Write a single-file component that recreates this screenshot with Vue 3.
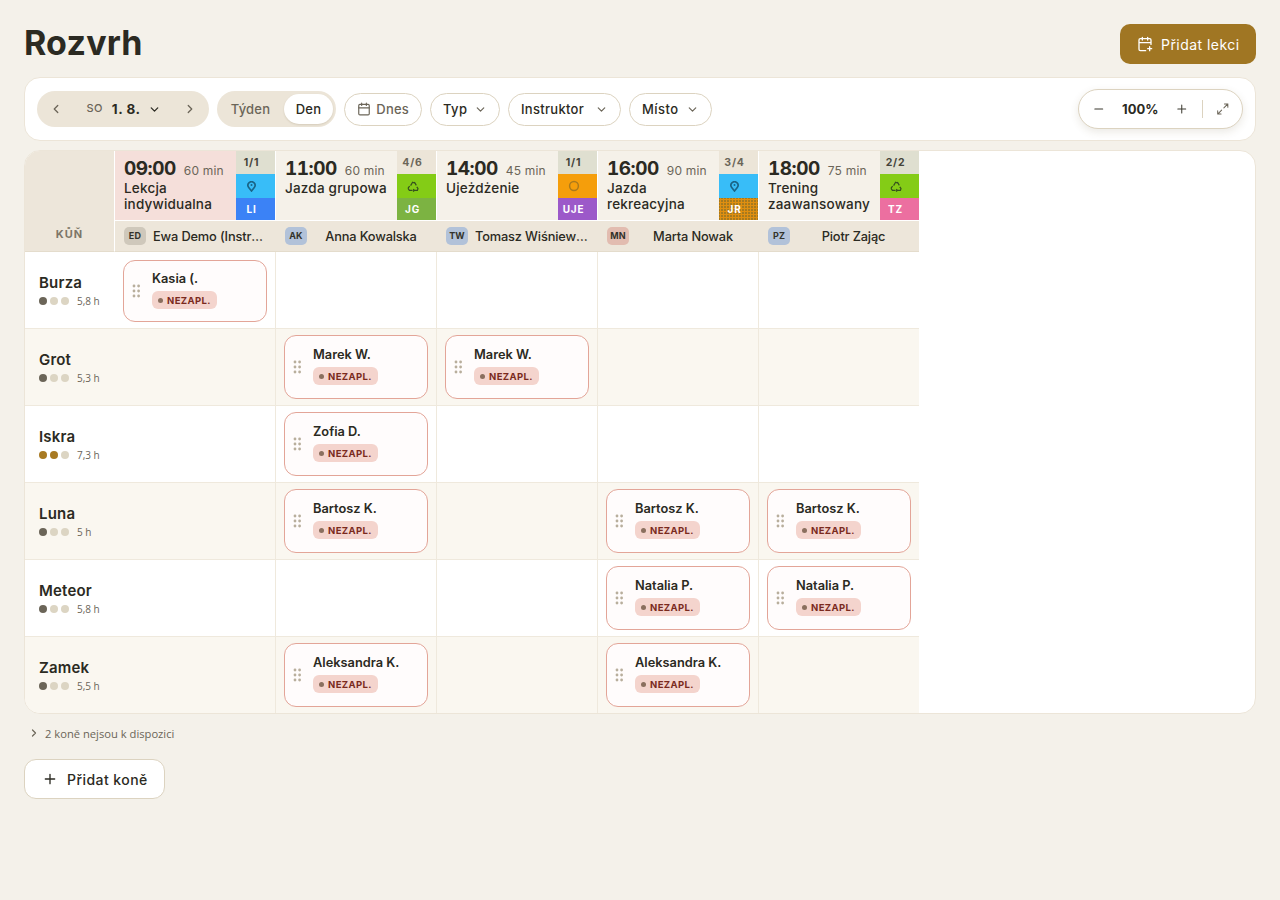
<script setup>
const lessons = [
  { time: '09:00', len: '60 min', title: 'Lekcja indywidualna', count: '1/1', full: true, icon: 'pin', iconBg: 'sky', code: 'LI', codeBg: 'blue', tone: 'rose', ini: 'ED', av: 'stone', name: 'Ewa Demo (Instruktor)' },
  { time: '11:00', len: '60 min', title: 'Jazda grupowa', count: '4/6', full: false, icon: 'leaf', iconBg: 'lime', code: 'JG', codeBg: 'green', tone: 'plain', ini: 'AK', av: 'steel', name: 'Anna Kowalska' },
  { time: '14:00', len: '45 min', title: 'Ujeżdżenie', count: '1/1', full: true, icon: 'ring', iconBg: 'amber', code: 'UJE', codeBg: 'purple', tone: 'plain', ini: 'TW', av: 'steel', name: 'Tomasz Wiśniewski' },
  { time: '16:00', len: '90 min', title: 'Jazda rekreacyjna', count: '3/4', full: false, icon: 'pin', iconBg: 'sky', code: 'JR', codeBg: 'ochre', tone: 'plain', ini: 'MN', av: 'blush', name: 'Marta Nowak' },
  { time: '18:00', len: '75 min', title: 'Trening zaawansowany', count: '2/2', full: true, icon: 'leaf', iconBg: 'lime', code: 'TZ', codeBg: 'pink', tone: 'plain', ini: 'PZ', av: 'steel', name: 'Piotr Zając' },
]

const horses = [
  { name: 'Burza', level: 1, dark: true, hours: '5,8 h', slots: ['Kasia (.', '', '', '', ''] },
  { name: 'Grot', level: 1, dark: true, hours: '5,3 h', slots: ['', 'Marek W.', 'Marek W.', '', ''] },
  { name: 'Iskra', level: 2, dark: false, hours: '7,3 h', slots: ['', 'Zofia D.', '', '', ''] },
  { name: 'Luna', level: 1, dark: true, hours: '5 h', slots: ['', 'Bartosz K.', '', 'Bartosz K.', 'Bartosz K.'] },
  { name: 'Meteor', level: 1, dark: true, hours: '5,8 h', slots: ['', '', '', 'Natalia P.', 'Natalia P.'] },
  { name: 'Zamek', level: 1, dark: true, hours: '5,5 h', slots: ['', 'Aleksandra K.', '', 'Aleksandra K.', ''] },
]

const filters = [
  { label: 'Typ', cls: 'w-typ' },
  { label: 'Instruktor', cls: 'w-instr' },
  { label: 'Místo', cls: 'w-misto' },
]

const grip = [[2, 2], [6.6, 2], [2, 7], [6.6, 7], [2, 12], [6.6, 12]]
</script>

<template>
  <div class="page">
    <header class="top">
      <h1>Rozvrh</h1>
      <button class="add-lesson">
        <svg width="16" height="16" viewBox="0 0 24 24" fill="none" stroke="currentColor" stroke-width="2" stroke-linecap="round" stroke-linejoin="round"><path d="M16 19h6M19 16v6M21 12.6V6a2 2 0 0 0-2-2H5a2 2 0 0 0-2 2v14a2 2 0 0 0 2 2h8M16 2v4M8 2v4M3 10h18"/></svg>
        Přidat lekci
      </button>
    </header>

    <div class="toolbar">
      <div class="date-pill">
        <svg class="arrow" width="14" height="14" viewBox="0 0 24 24" fill="none" stroke="currentColor" stroke-width="2.2" stroke-linecap="round" stroke-linejoin="round"><path d="m15 18-6-6 6-6"/></svg>
        <div class="date">
          <span class="dow">SO</span>
          <b>1. 8.</b>
          <svg width="13" height="13" viewBox="0 0 24 24" fill="none" stroke="#2b2a22" stroke-width="2.4" stroke-linecap="round" stroke-linejoin="round"><path d="m6 9 6 6 6-6"/></svg>
        </div>
        <svg class="arrow" width="14" height="14" viewBox="0 0 24 24" fill="none" stroke="currentColor" stroke-width="2.2" stroke-linecap="round" stroke-linejoin="round"><path d="m9 18 6-6-6-6"/></svg>
      </div>
      <div class="segment">
        <span class="seg">Týden</span>
        <span class="seg on">Den</span>
      </div>
      <button class="chip today">
        <svg width="14" height="14" viewBox="0 0 24 24" fill="none" stroke="currentColor" stroke-width="2" stroke-linecap="round" stroke-linejoin="round"><path d="M8 2v4M16 2v4M3 10h18"/><rect x="3" y="4" width="18" height="18" rx="2"/></svg>
        Dnes
      </button>
      <button v-for="f in filters" :key="f.label" class="chip" :class="f.cls">
        {{ f.label }}
        <svg width="13" height="13" viewBox="0 0 24 24" fill="none" stroke="#6b6558" stroke-width="2.2" stroke-linecap="round" stroke-linejoin="round"><path d="m6 9 6 6 6-6"/></svg>
      </button>
      <div class="zoom">
        <svg width="14" height="14" viewBox="0 0 24 24" fill="none" stroke="currentColor" stroke-width="1.8" stroke-linecap="round"><path d="M5 12h14"/></svg>
        <b>100%</b>
        <svg width="14" height="14" viewBox="0 0 24 24" fill="none" stroke="currentColor" stroke-width="1.8" stroke-linecap="round"><path d="M5 12h14M12 5v14"/></svg>
        <i class="sep"></i>
        <svg width="14" height="14" viewBox="0 0 24 24" fill="none" stroke="#6b6558" stroke-width="1.8" stroke-linecap="round" stroke-linejoin="round"><path d="M15 3h6v6M9 21H3v-6M21 3l-7 7M3 21l7-7"/></svg>
      </div>
    </div>

    <div class="board">
      <div class="grid">
        <div class="corner">KŮŇ</div>
        <div v-for="l in lessons" :key="l.time" class="lesson" :class="l.tone">
          <div class="info">
            <div class="when"><strong>{{ l.time }}</strong><span>{{ l.len }}</span></div>
            <div class="title">{{ l.title }}</div>
          </div>
          <div class="side">
            <div class="count" :class="{ full: l.full }">{{ l.count }}</div>
            <div class="kind" :class="l.iconBg">
              <svg v-if="l.icon === 'pin'" width="9" height="11" viewBox="0 0 10 12" fill="none" stroke="#1a6487" stroke-width="1.8"><path d="M5 11 1.9 7A3.9 3.9 0 1 1 8.1 7Z"/><circle cx="5" cy="4.4" r="1.1" fill="#1a6487" stroke="none"/></svg>
              <svg v-else-if="l.icon === 'leaf'" width="12" height="11" viewBox="0 0 12 11" fill="none" stroke="#35501f" stroke-width="1.2"><path d="M3.6 4.6 5.6 1.2 7.4 2M7.4 1l1.9 3.4M1 7.4 2.6 5M1 7.4 2.4 9.4H5M7 9.4h3.4L11 7.6 9.8 5.8M7 8l-1 1.4L7 10.6"/></svg>
              <svg v-else width="12" height="12" viewBox="0 0 12 12" fill="none" stroke="#ab7a1c" stroke-width="1.5"><circle cx="6" cy="6" r="4.4"/></svg>
            </div>
            <div class="code" :class="l.codeBg">{{ l.code }}</div>
          </div>
        </div>
        <div v-for="l in lessons" :key="l.ini" class="teacher">
          <span class="avatar" :class="l.av">{{ l.ini }}</span>
          <span class="teacher-name">{{ l.name }}</span>
        </div>

        <template v-for="(h, r) in horses" :key="h.name">
          <div class="horse" :class="{ alt: r % 2 }">
            <div class="horse-name">{{ h.name }}</div>
            <div class="horse-meta">
              <i v-for="n in 3" :key="n" class="dot" :class="{ lvl: n <= h.level, dark: h.dark }"></i>
              <span>{{ h.hours }}</span>
            </div>
          </div>
          <div v-for="(s, c) in h.slots" :key="c" class="slot" :class="{ alt: r % 2, last: c === 4 }">
            <div v-if="s" class="card" :class="{ short: r === 0 }">
              <svg class="grip" width="9" height="14" viewBox="0 0 9 14"><circle v-for="g in grip" :key="g.join()" :cx="g[0]" :cy="g[1]" r="1.4"/></svg>
              <div class="card-text">
                <div class="rider">{{ s }}</div>
                <span class="badge"><i></i>NEZAPL.</span>
              </div>
            </div>
          </div>
        </template>
      </div>
    </div>

    <div class="unavailable">
      <svg width="12" height="12" viewBox="0 0 24 24" fill="none" stroke="currentColor" stroke-width="2.4" stroke-linecap="round" stroke-linejoin="round"><path d="m9 18 6-6-6-6"/></svg>
      2 koně nejsou k dispozici
    </div>
    <button class="add-horse">
      <svg width="16" height="16" viewBox="0 0 24 24" fill="none" stroke="currentColor" stroke-width="2" stroke-linecap="round"><path d="M5 12h14M12 5v14"/></svg>
      Přidat koně
    </button>
  </div>
</template>

<style>
html, body { background: #f4f1ea; }
</style>

<style scoped>
.page {
  box-sizing: border-box;
  width: 1280px;
  min-height: 900px;
  padding: 24px;
  background: #f4f1ea;
  color: #2b2a22;
  font-family: Inter, "Liberation Sans", sans-serif;
}
button { font-family: inherit; cursor: pointer; }

.top { display: flex; justify-content: space-between; align-items: center; height: 40px; margin-bottom: 13px; }
h1 { margin: -3px 0 0; font-size: 34px; font-weight: 700; letter-spacing: 0.2px; line-height: 40px; }
.add-lesson {
  display: flex; align-items: center; gap: 8px;
  width: 136px; height: 40px; padding: 0 0 0 17px;
  background: #a07623; color: #fff; border: 0; border-radius: 10px;
  font-size: 14px; font-weight: 400; letter-spacing: 0.45px;
}

.toolbar {
  display: flex; align-items: center; gap: 8px;
  height: 64px; box-sizing: border-box; padding: 0 12px;
  background: #fff; border: 1px solid #ece5d8; border-radius: 16px;
}
.date-pill {
  display: flex; align-items: center; justify-content: space-between;
  width: 172px; height: 36px; box-sizing: border-box; padding: 0 12px;
  background: #ece5d8; border-radius: 18px; color: #6b6558;
}
.date { display: flex; align-items: center; gap: 9px; margin-left: 2px; }
.dow { font-size: 11px; letter-spacing: 0.4px; font-weight: 500; position: relative; top: -1px; }
.date b { color: #2b2a22; font-size: 13.5px; font-weight: 700; margin-right: -1px; letter-spacing: 0.5px; }
.segment {
  display: flex; align-items: center;
  width: 119px; height: 36px; box-sizing: border-box; padding: 3px 3px 3px 0;
  background: #ece5d8; border-radius: 18px;
}
.seg { width: 67px; text-align: center; font-size: 13px; font-weight: 500; color: #6b6558; letter-spacing: 0.2px; }
.seg.on { width: 49px; height: 30px; line-height: 30px; background: #fff; border-radius: 15px; color: #2b2a22; box-shadow: 0 1px 2px rgba(90, 70, 30, .15); }
.chip {
  display: flex; align-items: center; justify-content: space-between;
  height: 33px; box-sizing: border-box; padding: 0 12px;
  background: #fff; border: 1px solid #dcd3c0; border-radius: 17px;
  font-size: 13px; font-weight: 500; color: #2b2a22; letter-spacing: 0.45px;
}
.chip.today { width: 78px; color: #6b6558; letter-spacing: 0.2px; }
.w-typ { width: 70px; }
.w-instr { width: 113px; letter-spacing: 0.3px; }
.w-misto { width: 83px; }
.zoom {
  display: flex; align-items: center;
  margin-left: auto; width: 165px; height: 40px; box-sizing: border-box; padding: 0 13px;
  background: #fff; border: 1px solid #dcd3c0; border-radius: 20px;
  box-shadow: 0 3px 8px rgba(90, 70, 30, .12);
  color: #3a382e;
}
.zoom b { width: 72px; text-align: center; font-size: 13px; font-weight: 700; color: #2b2a22; }
.sep { width: 1px; height: 18px; background: #dcd3c0; margin: 0 13px 0 13px; }

.board {
  margin-top: 9px; height: 564px; box-sizing: border-box; overflow: hidden;
  background: #fff; border: 1px solid #ece5d8; border-radius: 16px;
}
.grid { display: grid; width: 894px; grid-template-columns: 90px repeat(4, 161px) 160px; grid-template-rows: 70px 31px repeat(6, 77px); }
.corner {
  grid-row: span 2; display: flex; align-items: flex-end; justify-content: center;
  padding-bottom: 10px; box-sizing: border-box;
  background: #ede6da; border-right: 1px solid #fff; border-bottom: 1px solid #e4dccc;
  font-size: 11px; font-weight: 700; letter-spacing: 1px; color: #7d7668;
}
.lesson { display: flex; border-right: 1px solid #fff; border-bottom: 1px solid #fff; min-width: 0; }
.lesson:nth-child(6) { border-right: 0; }
.lesson.rose { background: #f5dfda; }
.lesson.plain { background: #f5f1e9; }
.info { flex: 1; min-width: 0; padding: 7px 0 0 9px; }
.when { display: flex; align-items: baseline; gap: 8px; line-height: 22px; }
.when strong { font-size: 19px; font-weight: 700; letter-spacing: -0.5px; font-variant-numeric: tabular-nums; }
.when span { font-size: 12px; color: #6b6558; letter-spacing: 0.2px; }
.title { margin-top: -2px; font-size: 13.5px; font-weight: 500; line-height: 16px; letter-spacing: 0.2px; padding-right: 2px; }
.side { width: 39px; flex: none; display: flex; flex-direction: column; text-align: center; }
.count, .kind, .code { box-sizing: border-box; padding-right: 8px; }
.count { height: 23px; line-height: 23px; font-size: 10.5px; font-weight: 700; background: #ece5d8; color: #6b6558; letter-spacing: 0.8px; }
.count.full { background: #dfdfd0; color: #45443a; }
.kind { height: 24px; display: flex; align-items: center; justify-content: center; }
.code { height: 22px; line-height: 22px; font-size: 10px; font-weight: 700; color: #fff; letter-spacing: 0.8px; }
.sky { background: #38bdf8; }
.lime { background: #84cc16; }
.amber { background: #f59e0b; }
.blue { background: #3b82f6; }
.green { background: #7cb342; }
.purple { background: #9c59c9; }
.pink { background: #ec6fa0; }
.ochre {
  background-color: #a67a1f;
  background-image: radial-gradient(#e08f10 1px, transparent 1.2px);
  background-size: 3px 3px;
}
.teacher {
  display: flex; align-items: center; gap: 7px; min-width: 0;
  padding: 0 9px; box-sizing: border-box;
  background: #ede6da; border-bottom: 1px solid #e4dccc;
}
.avatar {
  flex: none; width: 22px; height: 18px; line-height: 18px; text-align: center;
  border-radius: 5px; font-size: 9px; font-weight: 700; color: #33322a; letter-spacing: 0.2px;
}
.avatar.stone { background: #cfc8bb; }
.avatar.steel { background: #b2c2d9; }
.avatar.blush { background: #e2bcb0; }
.teacher-name {
  flex: 1; min-width: 0; text-align: center;
  font-size: 12.8px; font-weight: 500; letter-spacing: -0.15px;
  white-space: nowrap; overflow: hidden; text-overflow: ellipsis;
}
.horse { padding: 0 0 0 14px; display: flex; flex-direction: column; justify-content: center; border-bottom: 1px solid #efe9dd; }
.slot { display: flex; align-items: center; padding: 0 8px; box-sizing: border-box; border-right: 1px solid #efe9dd; border-bottom: 1px solid #efe9dd; min-width: 0; }
.slot.last { border-right: 0; }
.alt { background: #faf7f0; }
.horse-name { font-size: 15px; font-weight: 600; letter-spacing: 0.2px; line-height: 20px; margin-bottom: 1px; }
.horse-meta { display: flex; align-items: center; gap: 3px; font-family: "Open Sans", sans-serif; font-size: 10px; color: #6b6558; }
.horse-meta span { margin-left: 5px; }
.dot { width: 8px; height: 8px; border-radius: 50%; background: #dcd5c3; }
.dot.lvl { background: #a87a22; }
.dot.lvl.dark { background: #6b6558; }
.card {
  display: flex; align-items: center; gap: 11px;
  flex: 1; height: 64px; box-sizing: border-box; padding-left: 8px;
  background: #fffcfc; border: 1px solid #e3a598; border-radius: 12px;
}
.card.short { height: 62px; margin-top: 2px; }
.grip { flex: none; fill: #b8ae9c; }
.card-text { padding-bottom: 2px; }
.rider { font-size: 12.8px; font-weight: 600; line-height: 16px; margin-bottom: 4px; }
.badge {
  display: flex; align-items: center; gap: 4px;
  width: fit-content; height: 18px; padding: 0 6px; border-radius: 6px;
  background: #f4d4cd; color: #7a2a1e;
  font-size: 9.5px; font-weight: 700; letter-spacing: 0.4px;
}
.badge i { width: 5px; height: 5px; border-radius: 50%; background: #8a6f5e; }

.unavailable {
  display: flex; align-items: center; gap: 5px;
  margin: 12px 0 0 4px; height: 14px;
  font-family: "Open Sans", sans-serif; font-size: 11.2px; color: #6b6558;
}
.add-horse {
  display: flex; align-items: center; gap: 9px;
  margin-top: 19px; width: 141px; height: 40px; padding: 0 0 0 17px;
  background: #fff; border: 1px solid #dcd3c0; border-radius: 12px;
  color: #2b2a22; font-size: 14px; font-weight: 500; letter-spacing: 0.45px;
}
</style>
